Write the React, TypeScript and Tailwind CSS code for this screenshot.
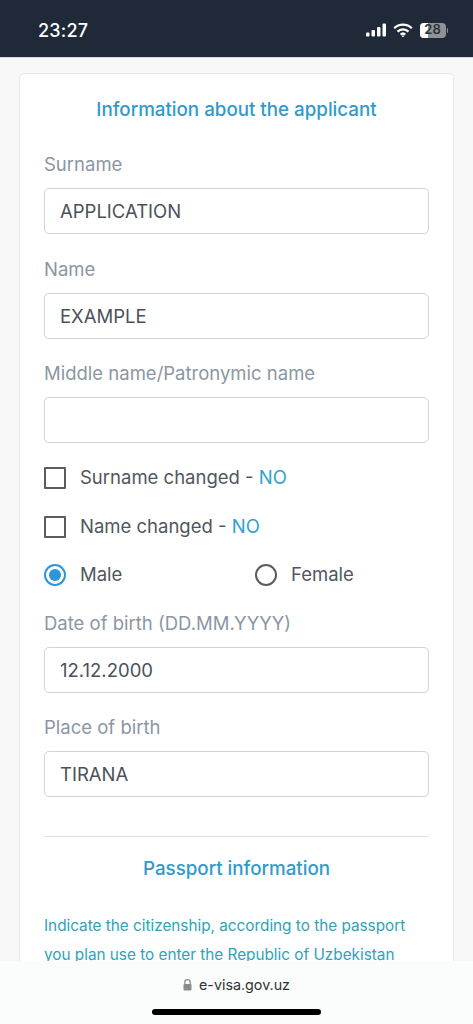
import React from "react";

function Field({ label, value }: { label: string; value: string }) {
  return (
    <div>
      <div className="h-[23px] mt-[1px] mb-[12px] text-[18.5px] leading-[23px] text-[#8b96a3]">{label}</div>
      <div className="h-[46px] rounded-[5px] border border-[#ced4da] bg-white px-[15px] pt-[2px] flex items-center text-[18.5px] text-[#4a5159]">
        {value}
      </div>
    </div>
  );
}

function Check({ label }: { label: string }) {
  return (
    <div className="h-[24px] flex items-center text-[18.5px] text-[#50565d]">
      <span className="w-[22px] h-[22px] border-[2.5px] border-[#5c5c5c] rounded-[1px] mr-[14px] shrink-0" />
      <span>
        {label} - <span className="text-[#2f9fd0]">NO</span>
      </span>
    </div>
  );
}

function Radio({ label, on }: { label: string; on?: boolean }) {
  return (
    <div className="flex items-center w-[211px] shrink-0 h-[24px] text-[18.5px] text-[#50565d]">
      {on ? (
        <span className="w-[22px] h-[22px] rounded-full border-[2.5px] border-[#2b96d8] mr-[14px] flex items-center justify-center shrink-0">
          <span className="w-[12px] h-[12px] rounded-full bg-[#2b96d8]" />
        </span>
      ) : (
        <span className="w-[22px] h-[22px] rounded-full border-[2.5px] border-[#5c5c5c] mr-[14px] shrink-0" />
      )}
      {label}
    </div>
  );
}

export default function App() {
  return (
    <div className="relative w-[473px] h-[1024px] overflow-hidden bg-[#f8f8f9] font-['Inter',sans-serif]">
      <div className="h-[58px] bg-[#1f2937] flex items-center justify-between pl-[38px] pr-[25px] border-b border-[#d5d8dc]">
        <span className="text-white text-[18px] font-medium tracking-[0.2px] mt-[3px]">23:27</span>
        <div className="flex items-center gap-[6px] mt-[3px]">
          <svg width="22" height="14" viewBox="0 0 22 14" fill="#fff">
            <rect x="1" y="9.5" width="3.5" height="4" rx="1" />
            <rect x="6.5" y="7" width="3.5" height="6.5" rx="1" />
            <rect x="12" y="4" width="3.5" height="9.5" rx="1" />
            <rect x="17.5" y="0.5" width="3.5" height="13" rx="1" />
          </svg>
          <svg width="20" height="15" viewBox="0 0 20 15" fill="none" stroke="#fff" strokeWidth="2.3" strokeLinecap="butt">
            <path d="M1.2 5.2a12.4 12.4 0 0 1 17.6 0" />
            <path d="M4.5 8.6a7.8 7.8 0 0 1 11 0" />
            <path d="M7.7 11.6a3.3 3.3 0 0 1 4.6 0" />
            <circle cx="10" cy="13.2" r="0.9" fill="#fff" stroke="none" />
          </svg>
          <div className="flex items-center ml-[1px]">
            <div className="relative w-[26px] h-[15px] rounded-[4px] bg-[#8f9296] overflow-hidden">
              <div className="absolute left-0 top-0 bottom-0 w-[8px] bg-white" />
              <span className="absolute inset-0 flex items-center justify-center text-[13px] font-semibold text-[#2a3038]">28</span>
            </div>
            <div className="ml-[1px] w-[1.5px] h-[5px] rounded-r-full bg-[#8f9296]" />
          </div>
        </div>
      </div>

      <div className="mx-[19px] mt-[15px] bg-white border border-[#e6e8ea] rounded-[5px] px-[24px] pt-[24px] pb-[120px]">
        <div className="text-center text-[18.75px] leading-[24px] font-medium text-[#2f9acb]">
          Information about the applicant
        </div>
        <div className="mt-[30px] flex flex-col gap-[22.5px]">
          <Field label="Surname" value="APPLICATION" />
          <Field label="Name" value="EXAMPLE" />
          <Field label="Middle name/Patronymic name" value="" />
        </div>
        <div className="mt-[23px] flex flex-col gap-[24.5px]">
          <Check label="Surname changed" />
          <Check label="Name changed" />
          <div className="flex">
            <Radio label="Male" on />
            <Radio label="Female" />
          </div>
        </div>
        <div className="mt-[23.5px] flex flex-col gap-[22.5px]">
          <Field label="Date of birth (DD.MM.YYYY)" value="12.12.2000" />
          <Field label="Place of birth" value="TIRANA" />
        </div>
        <div className="mt-[39px] border-t border-[#dfe2e5]" />
        <div className="mt-[20px] text-center text-[18.75px] leading-[24px] font-medium text-[#2f9acb]">
          Passport information
        </div>
        <div className="mt-[30px] text-[15.3px] leading-[29px] text-[#2ea3b8]">
          Indicate the citizenship, according to the passport you plan use to enter the Republic of Uzbekistan
        </div>
      </div>

      <div className="absolute left-0 right-0 top-[961px] bottom-0 bg-[#fbfcfc] flex flex-col items-center">
        <div className="mt-[14px] flex items-center gap-[7px] text-[14.3px] leading-[20px] text-[#2f3235]">
          <svg width="9" height="12" viewBox="0 0 9 12">
            <path d="M1.8 5V3.4a2.7 2.7 0 0 1 5.4 0V5" fill="none" stroke="#8a8a8a" strokeWidth="1.2" />
            <rect x="0.5" y="5" width="8" height="6.5" rx="1" fill="#8a8a8a" />
          </svg>
          e-visa.gov.uz
        </div>
        <div className="mt-[14px] w-[169px] h-[6px] rounded-full bg-black" />
      </div>
    </div>
  );
}
